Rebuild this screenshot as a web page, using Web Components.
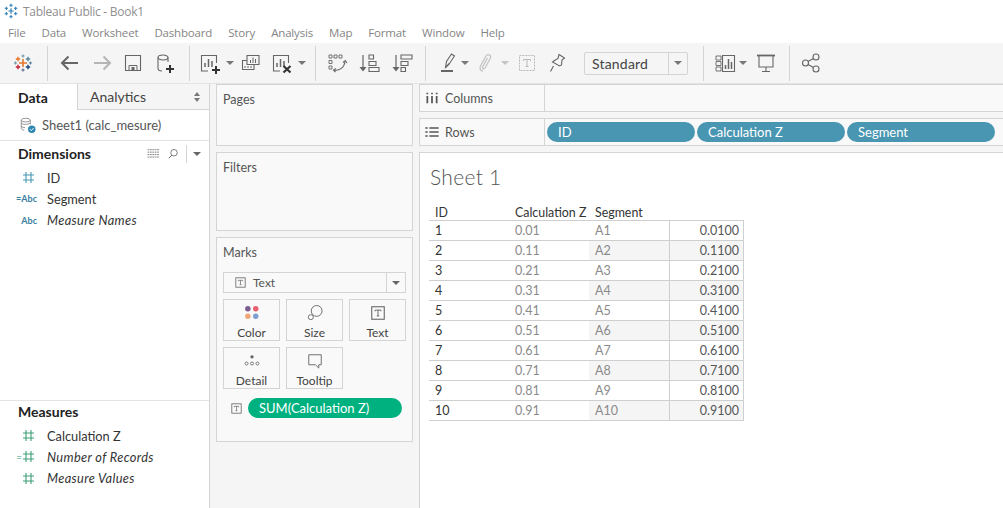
<!doctype html>
<html>
<head>
<meta charset="utf-8">
<title>Tableau Public - Book1</title>
<style>
  html, body { margin: 0; height: 100%; overflow: hidden; }
  body { width: 1003px; height: 508px; display: flex; flex-direction: column; background: #fff; font-family: Lato, "Liberation Sans", sans-serif; color: #333; }
  tb-main { flex: 1; min-height: 0; }
</style>
</head>
<body>
<tb-titlebar></tb-titlebar>
<tb-menubar></tb-menubar>
<tb-toolbar></tb-toolbar>
<tb-main>
  <tb-data-pane></tb-data-pane>
  <tb-cards>
    <tb-card label="Pages" style="height:62px"></tb-card>
    <tb-card label="Filters" style="height:79px"></tb-card>
    <tb-marks></tb-marks>
  </tb-cards>
  <tb-worksheet>
    <tb-shelf label="Columns" icon="columns"></tb-shelf>
    <tb-shelf label="Rows" icon="rows">
      <tb-pill>ID</tb-pill>
      <tb-pill>Calculation Z</tb-pill>
      <tb-pill>Segment</tb-pill>
    </tb-shelf>
    <tb-viz></tb-viz>
  </tb-worksheet>
</tb-main>

<script>
// every toolbar icon lives here, 24x24 box
const G = 'fill="none" stroke="#666" stroke-width="1.1"';
const plus = (x, y, c, s = 3, w = 1.3) => `<path d="M${x - s} ${y}h${s * 2}M${x} ${y - s}v${s * 2}" stroke="${c}" stroke-width="${w}" fill="none"/>`;
const heavyPlus = (x, y) => `<path d="M${x - 4} ${y}h8M${x} ${y - 4}v8" stroke="#333" stroke-width="2" fill="none"/>`;
const ICONS = {
  logo: plus(12, 12, '#e8762b', 4, 1.6) + plus(7, 8, '#e8762b', 2.2, 1.4) + plus(17, 8, '#59879b', 2.2, 1.4) + plus(7, 16, '#c72035', 2.2, 1.4) + plus(17, 16, '#1f447e', 2.2, 1.4) +
        plus(12, 5, '#7099a6', 1.6, 1.2) + plus(12, 19, '#5b6591', 1.6, 1.2) + plus(4.5, 12, '#7099a6', 1.6, 1.2) + plus(19.5, 12, '#59879b', 1.6, 1.2),
  back: '<path d="M4 12h16M10.5 5.5L4 12l6.5 6.5" fill="none" stroke="#666" stroke-width="2"/>',
  forward: '<path d="M4 12h16M13.5 5.5L20 12l-6.5 6.5" fill="none" stroke="#b5b5b5" stroke-width="2"/>',
  save: `<path d="M4.5 4.5h15v15h-15z" ${G}/><path d="M8 19.500v-5h8v5z" fill="none" stroke="#666"/><rect x="10.500" y="16" width="3" height="3.500" fill="#666"/>`,
  data: `<path d="M5 6.5v11c0 1.500 2 2.500 4 2.500M15 6.5V11" ${G}/><ellipse cx="10" cy="6.5" rx="5" ry="2.5" ${G}/>${heavyPlus(17, 18)}`,
  newsheet: `<path d="M10 20H3.500V4.500h15V12" ${G}/><path d="M7 16v-4M10.500 16V8M14 16v-6" stroke="#666" stroke-width="1.500" fill="none"/>${heavyPlus(18, 19)}`,
  duplicate: `<path d="M8 4.500h12v9H8z" ${G}/><path d="M11.500 12V9M14 12V6.500M16.500 12V8" stroke="#666" stroke-width="1"/><path d="M8 9.500H3.500v9H15v-5" ${G}/><path d="M6 17v-2M9 17v-2M12 17v-2" stroke="#666" stroke-width="1"/>`,
  clear: `<path d="M10 20H3.500V4.500h15V12" ${G}/><path d="M7 16v-4M10.500 16V8M14 16v-6" stroke="#666" stroke-width="1.500" fill="none"/><path d="M13.500 15l7 6.500M20.500 15l-7 6.500" stroke="#333" stroke-width="2.200"/>`,
  swap: `<path d="M4 4h3v3H4zM9 4h3v3H9zM14 4h3v3h-3zM4 9.500h3v3H4zM4 15h3v3H4z" fill="none" stroke="#666" stroke-width=".9"/><path d="M9 19c5 1 10-2 11-8" ${G}/><path d="M18 11.500l2.300-2 1.700 2.500M11 17.500L8.500 19l2 2" ${G}/>`,
  asc: `<path d="M6 4v15" stroke="#666" stroke-width="1.200"/><path d="M2.500 16L6 20.500 9.500 16z" fill="#666"/><path d="M12 4h4.500v4H12zM12 10.500h7v4h-7zM12 16.500h10v4H12z" ${G}/>`,
  desc: `<path d="M6 4v15" stroke="#666" stroke-width="1.200"/><path d="M2.500 16L6 20.500 9.500 16z" fill="#666"/><path d="M11 4h11v4H11zM11 10.500h7v4h-7zM11 16.500h4.500v4H11z" ${G}/>`,
  highlight: `<path d="M9.500 16.500l1-6L15.500 3l3 2-5 7.500z" ${G}/><path d="M9.500 16.500l4-4" ${G}/><rect x="5" y="19" width="12" height="2" fill="#666"/>`,
  clip: '<path d="M9 20c-3 0-3.500-3-2.500-5L12 5c1.500-2.500 5.500-1 4.500 2L11 17c-1 1.500-3 .5-2.500-1l5-9" fill="none" stroke="#c4c4c4" stroke-width="1.300"/>',
  tbox: '<rect x="4.500" y="4.500" width="15" height="15" fill="none" stroke="#b9b9b9" stroke-dasharray="2 1"/><path d="M8.500 10V8.500h7V10M12 8.500v7M10.500 15.500h3" fill="none" stroke="#b9b9b9"/>',
  pin: `<path d="M14 3.500l5.500 3.500-2.500 2-.5 5-2 1L7.500 11l2-1.500 3.500-2zM8.500 15l-3 5.500" ${G}/>`,
  showme: `<path d="M3 5h5v4H3zM3 10.500h5v4H3zM3 16h5v4H3z" fill="none" stroke="#666" stroke-width=".9"/><path d="M9.500 4.500h12v16h-12z" ${G}/><path d="M12.500 18v-4M15.500 18V8M18.500 18v-7" stroke="#666" stroke-width="1.500"/>`,
  present: `<path d="M3 4.500h18" stroke="#666" stroke-width="1.800"/><path d="M5 5v11h14V5M12 16v4M8 20.500h8" ${G}/>`,
  share: `<circle cx="6.500" cy="12" r="3" ${G}/><circle cx="17" cy="6" r="3" ${G}/><circle cx="17" cy="18" r="3" ${G}/><path d="M9 10.500l5.500-3M9 13.500l5.500 3" ${G}/>`,
  tsmall: '<rect x="4.500" y="4.500" width="15" height="15" fill="none" stroke="#666" stroke-width="1.300"/><path d="M8.500 10V8.500h7V10M12 8.500v7M10.500 15.500h3" fill="none" stroke="#555"/>',
  color: '<circle cx="7" cy="7" r="3.300" fill="#7b5d91"/><circle cx="16.500" cy="7" r="3.300" fill="#e8606e"/><circle cx="7" cy="16" r="3.300" fill="#f0a777"/><circle cx="16.500" cy="16" r="3.300" fill="#7c9fcf"/>',
  size: '<circle cx="14" cy="9.500" r="6.500" fill="none" stroke="#666" stroke-width="1.100"/><circle cx="7" cy="17" r="3" fill="#fff" stroke="#666" stroke-width="1.100"/>',
  detail: '<circle cx="12" cy="7" r="2" fill="#666"/><circle cx="5.500" cy="15" r="1.800" fill="none" stroke="#666"/><circle cx="12" cy="15" r="1.800" fill="none" stroke="#666"/><circle cx="18.500" cy="15" r="1.800" fill="none" stroke="#666"/>',
  tooltip: '<path d="M4.500 4.500h15v12h-3v4l-4-4h-8z" fill="none" stroke="#666" stroke-width="1.100"/>',
  columns: '<path d="M5 9v11M12 9v11M19 9v11" stroke="#555" stroke-width="2.600"/><path d="M5 4v2.500M12 4v2.500M19 4v2.500" stroke="#555" stroke-width="2.600"/>',
  rows: '<path d="M8 6h14M8 12h14M8 18h14M2 6h3.500M2 12h3.500M2 18h3.500" stroke="#555" stroke-width="2.200"/>',
  datasource: '<ellipse cx="9" cy="5.500" rx="6" ry="2.500" fill="none" stroke="#777"/><path d="M3 5.500v11c0 1.300 2 2.300 4 2.500M15 5.500V11M3 9.500c1 2 9 2.500 12 0M3 13.500c1 1.500 3 2 5 2" fill="none" stroke="#777"/><circle cx="17" cy="17.500" r="5" fill="#2f86b0"/><path d="M14.500 17.500l2 2 3-3.500" fill="none" stroke="#fff" stroke-width="1.200"/>',
  grid: '<path d="M1 5h22M1 9.500h22M1 14h22M1 18.500h22" stroke="#555" stroke-width="1.300" stroke-dasharray="3.400 1" fill="none"/>',
  search: '<circle cx="14" cy="9.500" r="6.500" fill="none" stroke="#555" stroke-width="1.500"/><path d="M9.500 14.500l-6 6" stroke="#555" stroke-width="1.800"/>'
};
const svg = (name, size = 24) => `<svg width="${size}" height="${size}" viewBox="0 0 24 24" style="display:block;flex:none" aria-hidden="true">${ICONS[name]}</svg>`;

class TbTitlebar extends HTMLElement {
  constructor() {
    super();
    const c = '#2f7fb5';
    const logo = plus(12, 12, c, 4, 1.8) + plus(5, 8, c, 2.5, 1.6) + plus(19, 8, c, 2.5, 1.6) + plus(5, 16, c, 2.5, 1.6) + plus(19, 16, c, 2.5, 1.6) + plus(12, 3.5, c, 2.5, 1.6) + plus(12, 20.5, c, 2.5, 1.6);
    this.attachShadow({ mode: 'open' }).innerHTML = `
      <style>
        :host { display: flex; align-items: center; height: 22px; padding-left: 3px; gap: 4px; background: #fff; flex: none; font: 12px "Open Sans", sans-serif; letter-spacing: -.27px; color: #8f8f8f; }
      </style>
      <svg width="16" height="16" viewBox="0 0 24 24" aria-hidden="true">${logo}</svg>
      <span>Tableau Public - Book1</span>`;
  }
}

class TbMenubar extends HTMLElement {
  constructor() {
    super();
    const items = ['File', 'Data', 'Worksheet', 'Dashboard', 'Story', 'Analysis', 'Map', 'Format', 'Window', 'Help'];
    this.attachShadow({ mode: 'open' }).innerHTML = `
      <style>
        :host { display: flex; align-items: center; height: 21px; padding-left: 8px; gap: 16px; background: #fff; flex: none; font: 11.5px "Open Sans", sans-serif; letter-spacing: -.17px; color: #858585; }
      </style>
      ${items.map(i => `<span>${i}</span>`).join('')}`;
  }
}

class TbToolbar extends HTMLElement {
  constructor() {
    super();
    // [kind, left gap]
    const tools = [['logo', 11], ['|', 12], ['back', 10], ['forward', 8], ['save', 7], ['data', 8], ['|', 12],
      ['newsheet', 8], ['v', 4], ['duplicate', 5], ['clear', 7], ['v', 4], ['|', 9],
      ['swap', 9], ['asc', 8], ['desc', 9], ['|', 11],
      ['highlight', 10], ['v', 1], ['clip', 5], ['vd', 3], ['tbox', 6], ['pin', 6], ['select', 15], ['|', 15],
      ['showme', 9], ['v', 2], ['present', 7], ['|', 11], ['share', 9]];
    const html = tools.map(([k, gap]) => {
      const m = `style="margin-left:${gap}px"`;
      if (k === '|') return `<i class="sep" ${m}></i>`;
      if (k === 'v') return `<i class="caret" ${m}></i>`;
      if (k === 'vd') return `<i class="caret off" ${m}></i>`;
      if (k === 'select') return `<div class="select" ${m}><span>Standard</span><b><i class="caret dark"></i></b></div>`;
      return `<span ${m}>${svg(k)}</span>`;
    }).join('');
    this.attachShadow({ mode: 'open' }).innerHTML = `
      <style>
        :host { display: flex; align-items: center; box-sizing: border-box; height: 41px; background: #f5f5f5; border-bottom: 1px solid #e3e3e3; flex: none; font-family: Lato, sans-serif; }
        .sep { display: block; width: 1px; height: 35px; background: #d4d4d4; flex: none; }
        .caret { display: block; width: 0; height: 0; border: 4px solid transparent; border-top: 4px solid #777; border-bottom: 0; flex: none; }
        .caret.off { border-top-color: #c4c4c4; }
        .select { box-sizing: border-box; width: 104px; height: 23px; display: flex; align-items: center; border: 1px solid #d4d4d4; border-radius: 2px; background: #f5f5f5; font-size: 14px; color: #444; flex: none; }
        .select span { flex: 1; padding-left: 7px; letter-spacing: .2px; }
        .select b { width: 18px; height: 100%; border-left: 1px solid #d4d4d4; display: flex; align-items: center; justify-content: center; }
      </style>${html}`;
  }
}

class TbMain extends HTMLElement {
  constructor() {
    super();
    this.attachShadow({ mode: 'open' }).innerHTML = `
      <style>
        :host { display: flex; background: #f5f5f5; overflow: hidden; }
      </style><slot></slot>`;
  }
}

class TbField extends HTMLElement {
  constructor() {
    super();
    const hash = c => `<svg width="13" height="13" viewBox="0 0 13 13" aria-hidden="true"><path d="M4 1v11M9 1v11M1 4h11M1 9h11" stroke="${c}" stroke-width="1.100" fill="none"/></svg>`;
    const kinds = {
      num: `<span class="i r">${hash('#4996b2')}</span>`,
      abc: '<span class="i abc">Abc</span>',
      eqabc: '<span class="i abc">=Abc</span>',
      meas: `<span class="i r">${hash('#3e9f78')}</span>`,
      eqmeas: `<span class="i r"><em>=</em>${hash('#3e9f78')}</span>`
    };
    this.attachShadow({ mode: 'open' }).innerHTML = `
      <style>
        :host { display: flex; align-items: center; height: 21.300px; font-size: 12.800px; color: #333; }
        :host([italic]) .t { font-style: italic; letter-spacing: .35px; }
        .i { width: 37px; margin-right: 10px; flex: none; display: flex; justify-content: flex-end; align-items: center; }
        .r { padding-right: 2px; box-sizing: border-box; }
        .r em { font: 10px Lato, sans-serif; color: #3e9f78; }
        .abc { font-size: 9px; color: #3a7ea0; font-weight: 700; }
      </style>${kinds[this.getAttribute('kind')]}<span class="t"><slot></slot></span>`;
  }
}

class TbDataPane extends HTMLElement {
  constructor() {
    super();
    this.attachShadow({ mode: 'open' }).innerHTML = `
      <style>
        :host { display: flex; flex-direction: column; width: 209px; background: #fff; border-right: 1px solid #d4d4d4; flex: none; }
        .tabs { display: flex; height: 26px; flex: none; font-size: 14px; }
        .tab { display: flex; align-items: center; }
        .data { width: 77px; padding-left: 18px; box-sizing: border-box; font-weight: 700; color: #222; }
        .ana { flex: 1; padding-left: 12px; background: #f5f5f5; border-left: 1px solid #d4d4d4; border-bottom: 1px solid #d4d4d4; color: #444; justify-content: space-between; padding-right: 8px; }
        .ana svg { display: block; }
        .src { display: flex; align-items: center; gap: 5px; box-sizing: border-box; height: 31px; padding-left: 19px; border-bottom: 1px solid #e3e3e3; font-size: 13px; color: #555; flex: none; }
        .head { display: flex; align-items: center; box-sizing: border-box; height: 26px; padding: 0 0 1px 18px; font-size: 14px; font-weight: 700; color: #222; flex: none; }
        .tools { margin-left: auto; display: flex; align-items: center; padding-right: 8px; }
        .tools i { display: block; width: 1px; height: 18px; background: #d4d4d4; margin: 0 6px 0 7px; }
        .tools b { display: block; width: 0; height: 0; border: 4px solid transparent; border-top: 4px solid #666; border-bottom: 0; }
        .dims { flex: 1; }
        .meas { height: 108px; border-top: 1px solid #e3e3e3; box-sizing: border-box; flex: none; }
        .meas .head { height: 24px; padding-bottom: 4px; }
      </style>
      <div class="tabs">
        <div class="tab data">Data</div>
        <div class="tab ana">Analytics
          <svg width="8" height="12" viewBox="0 0 8 12" aria-hidden="true"><path d="M4 1L7 5H1zM4 11L1 7h6z" fill="#777"/></svg>
        </div>
      </div>
      <div class="src">${svg('datasource', 18)}<span>Sheet1 (calc_mesure)</span></div>
      <div class="dims">
        <div class="head">Dimensions
          <div class="tools">${svg('grid', 13)}<span style="margin-left:7px">${svg('search', 12)}</span><i></i><b></b></div>
        </div>
        <div class="list">
          <tb-field kind="num">ID</tb-field>
          <tb-field kind="eqabc">Segment</tb-field>
          <tb-field kind="abc" italic>Measure Names</tb-field>
        </div>
      </div>
      <div class="meas">
        <div class="head">Measures</div>
        <div class="list">
          <tb-field kind="meas">Calculation Z</tb-field>
          <tb-field kind="eqmeas" italic>Number of Records</tb-field>
          <tb-field kind="meas" italic>Measure Values</tb-field>
        </div>
      </div>`;
  }
}

class TbCards extends HTMLElement {
  constructor() {
    super();
    this.attachShadow({ mode: 'open' }).innerHTML = `
      <style>
        :host { display: flex; flex-direction: column; gap: 6px; width: 197px; padding: 0 6px; flex: none; }
      </style><slot></slot>`;
  }
}

class TbCard extends HTMLElement {
  constructor() {
    super();
    this.attachShadow({ mode: 'open' }).innerHTML = `
      <style>
        :host { display: block; box-sizing: border-box; background: #f9f9f9; border: 1px solid #d4d4d4; padding: 7px 6px; font-size: 12.500px; color: #555; flex: none; }
      </style>${this.getAttribute('label')}<slot></slot>`;
  }
}

class TbMarkButton extends HTMLElement {
  constructor() {
    super();
    this.attachShadow({ mode: 'open' }).innerHTML = `
      <style>
        :host { display: flex; flex-direction: column; align-items: center; box-sizing: border-box; height: 42px; border: 1px solid #d4d4d4; background: #f9f9f9; padding-top: 3px; font-size: 12px; color: #444; }
        span { margin-top: 3px; line-height: 14px; }
      </style>${svg(this.getAttribute('icon'), 20)}<span>${this.getAttribute('label')}</span>`;
  }
}

class TbMarks extends HTMLElement {
  constructor() {
    super();
    this.attachShadow({ mode: 'open' }).innerHTML = `
      <style>
        :host { display: block; box-sizing: border-box; height: 205px; background: #f9f9f9; border: 1px solid #d4d4d4; padding: 7px 6px 0; font-size: 12.500px; color: #555; flex: none; }
        .title { height: 27px; line-height: 15px; }
        .type { box-sizing: border-box; height: 21px; display: flex; align-items: center; border: 1px solid #d4d4d4; color: #555; margin-bottom: 6px; }
        .type .lbl { flex: 1; display: flex; align-items: center; gap: 5px; padding-left: 9px; font-size: 12px; }
        .type b { width: 18px; height: 100%; border-left: 1px solid #d4d4d4; display: flex; align-items: center; justify-content: center; }
        .type b i { width: 0; height: 0; border: 4px solid transparent; border-top: 4px solid #666; border-bottom: 0; }
        .grid { display: grid; grid-template-columns: repeat(3, 57px); gap: 6px; }
        .pillrow { display: flex; align-items: center; margin-top: 9px; height: 20px; gap: 4px; padding-left: 6px; }
        .pill { flex: 1; height: 20px; margin-right: 4px; border-radius: 10px; background: #00b180; color: #fff; font-size: 13px; line-height: 20px; padding-left: 11px; }
      </style>
      <div class="title">Marks</div>
      <div class="type"><div class="lbl">${svg('tsmall', 15)}Text</div><b><i></i></b></div>
      <div class="grid">
        <tb-mark-button icon="color" label="Color"></tb-mark-button>
        <tb-mark-button icon="size" label="Size"></tb-mark-button>
        <tb-mark-button icon="tsmall" label="Text"></tb-mark-button>
        <tb-mark-button icon="detail" label="Detail"></tb-mark-button>
        <tb-mark-button icon="tooltip" label="Tooltip"></tb-mark-button>
      </div>
      <div class="pillrow">${svg('tsmall', 15)}<div class="pill">SUM(Calculation Z)</div></div>`;
  }
}

class TbWorksheet extends HTMLElement {
  constructor() {
    super();
    this.attachShadow({ mode: 'open' }).innerHTML = `
      <style>
        :host { display: flex; flex-direction: column; gap: 6px; flex: 1; min-width: 0; }
      </style><slot></slot>`;
  }
}

class TbShelf extends HTMLElement {
  constructor() {
    super();
    this.attachShadow({ mode: 'open' }).innerHTML = `
      <style>
        :host { display: flex; box-sizing: border-box; height: 28px; background: #f9f9f9; border: 1px solid #d4d4d4; border-right: 0; font-size: 12.500px; color: #555; flex: none; }
        .lbl { width: 125px; box-sizing: border-box; display: flex; align-items: center; gap: 5px; padding-left: 4px; border-right: 1px solid #d4d4d4; }
        .pills { display: flex; align-items: center; gap: 2px; padding-left: 2px; }
      </style>
      <div class="lbl">${svg(this.getAttribute('icon'), 16)}${this.getAttribute('label')}</div>
      <div class="pills"><slot></slot></div>`;
  }
}

class TbPill extends HTMLElement {
  constructor() {
    super();
    this.attachShadow({ mode: 'open' }).innerHTML = `
      <style>
        :host { display: block; box-sizing: border-box; width: 148px; height: 20px; line-height: 20px; padding-left: 11px; border-radius: 10px; background: #4996b2; color: #fff; font-size: 13px; }
      </style><slot></slot>`;
  }
}

class TbViz extends HTMLElement {
  constructor() {
    super();
    const rows = [[1, '0.01', 'A1', '0.0100'], [2, '0.11', 'A2', '0.1100'], [3, '0.21', 'A3', '0.2100'], [4, '0.31', 'A4', '0.3100'], [5, '0.41', 'A5', '0.4100'],
      [6, '0.51', 'A6', '0.5100'], [7, '0.61', 'A7', '0.6100'], [8, '0.71', 'A8', '0.7100'], [9, '0.81', 'A9', '0.8100'], [10, '0.91', 'A10', '0.9100']];
    const body = rows.map((r, i) => `
      <div class="row${i % 2 ? ' even' : ''}">
        <span class="id">${r[0]}</span><span class="g">${r[1]}</span><span class="g band">${r[2]}</span><span class="val band">${r[3]}</span>
      </div>`).join('');
    this.attachShadow({ mode: 'open' }).innerHTML = `
      <style>
        :host { display: block; flex: 1; background: #fff; border-top: 1px solid #d4d4d4; border-left: 1px solid #d4d4d4; padding: 11px 0 0 9px; min-height: 0; }
        h1 { margin: 0 0 12px; font: 300 21px/26px Lato, sans-serif; color: #555; letter-spacing: .3px; padding-left: 1px; }
        .head { display: grid; grid-template-columns: 80px 80px 80px 75px; height: 18px; width: 315px; box-sizing: border-box; font-size: 12.400px; color: #333; line-height: 22px; }
        .head span { padding-left: 6px; }
        .table { width: 315px; border-top: 1px solid #cfcfcf; }
        .row { display: grid; grid-template-columns: 80px 80px 80px 75px; grid-template-rows: 19px; height: 20px; box-sizing: border-box; border-bottom: 1px solid #cfcfcf; font-size: 12.500px; line-height: 20px; }
        .row span { padding-left: 6px; height: 19px; }
        .id { color: #333; }
        .g { color: #8a8a8a; }
        .val { color: #555; text-align: right; padding: 0 4px 0 0 !important; border-left: 1px solid #cfcfcf; border-right: 1px solid #cfcfcf; }
        .even .band { background: #f5f5f5; }
      </style>
      <h1>Sheet 1</h1>
      <div class="head"><span>ID</span><span>Calculation Z</span><span>Segment</span></div>
      <div class="table">${body}</div>`;
  }
}

customElements.define('tb-titlebar', TbTitlebar);
customElements.define('tb-menubar', TbMenubar);
customElements.define('tb-toolbar', TbToolbar);
customElements.define('tb-main', TbMain);
customElements.define('tb-field', TbField);
customElements.define('tb-data-pane', TbDataPane);
customElements.define('tb-cards', TbCards);
customElements.define('tb-card', TbCard);
customElements.define('tb-mark-button', TbMarkButton);
customElements.define('tb-marks', TbMarks);
customElements.define('tb-worksheet', TbWorksheet);
customElements.define('tb-shelf', TbShelf);
customElements.define('tb-pill', TbPill);
customElements.define('tb-viz', TbViz);
</script>
</body>
</html>
